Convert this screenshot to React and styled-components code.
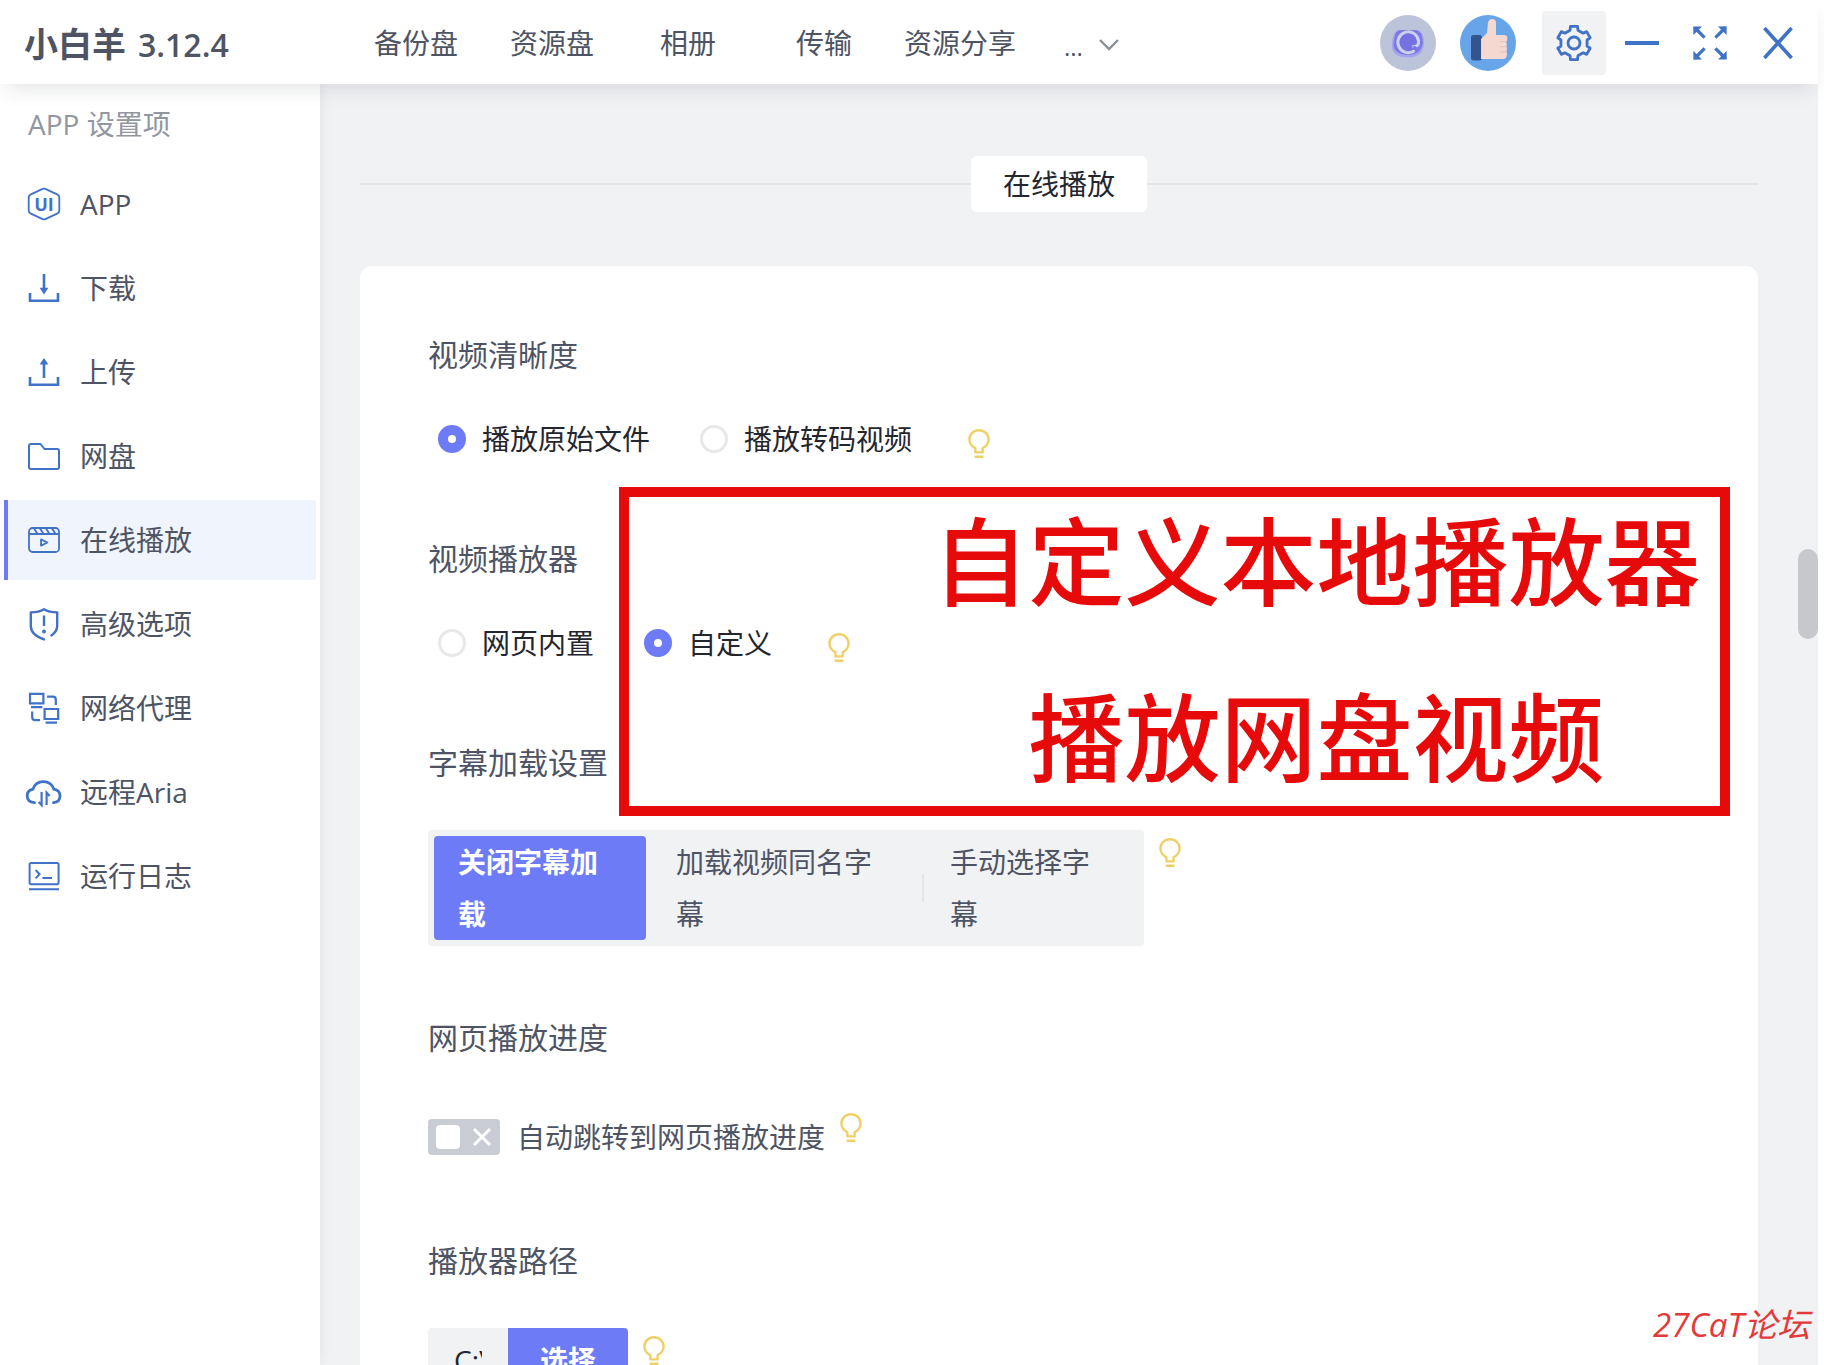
import React, { useState } from "react";
import styled, { createGlobalStyle, css } from "styled-components";

const color = {
  primary: "#6d7cf6",
  icon: "#4072c8",
  text: "#4e5464",
  strong: "#23262f",
  muted: "#92969f",
  fill: "#f1f2f4",
  line: "#e3e5e8",
  bulb: "#efd066",
  mark: "#e60a0a",
};

const GlobalStyle = createGlobalStyle`
  *, *::before, *::after { box-sizing: border-box; }
  body {
    margin: 0;
    background: #fff;
    color: ${color.text};
    font-family: "Open Sans", "Noto Sans CJK SC", sans-serif;
    font-size: 28px;
    line-height: 40px;
  }
  button, input { font: inherit; color: inherit; }
  svg { display: block; flex: none; }
`;

const Window = styled.div`
  display: flex;
  flex-direction: column;
  height: 100vh;
  overflow: hidden;
`;

const Header = styled.header`
  position: relative;
  z-index: 2;
  display: flex;
  align-items: center;
  height: 84px;
  flex: none;
  margin-right: 6px;
  padding: 2px 8px 0 24px;
  background: #fff;
  box-shadow: 0 10px 20px -6px rgba(30, 35, 55, 0.13);
`;

const Brand = styled.h1`
  display: flex;
  align-items: baseline;
  gap: 12px;
  width: 324px;
  margin: 0;
  padding-top: 2px;
  font-size: 34px;
  font-weight: 700;
`;

const Version = styled.span`
  font-size: 32px;
  font-weight: 600;
`;

const Nav = styled.nav`
  display: flex;
  flex: 1;
  padding-top: 4px;
`;

const navItem = css`
  color: ${color.text};
  text-decoration: none;
  white-space: nowrap;
`;

const NavLink = styled.a`
  ${navItem}
  width: 136px;
  text-align: center;
`;

const MoreButton = styled.button`
  ${navItem}
  display: flex;
  align-items: center;
  gap: 16px;
  padding: 0 36px;
  border: 0;
  background: none;
`;

const Dots = styled.span`
  font-size: 24px;
  line-height: 40px;
  padding-top: 4px;
`;

const Accounts = styled.div`
  display: flex;
  gap: 24px;
  margin-right: 26px;
`;

const AvatarButton = styled.button`
  padding: 0;
  border: 0;
  border-radius: 50%;
  background: none;
`;

const WindowControls = styled.div`
  display: flex;
  gap: 4px;
`;

const ControlButton = styled.button`
  display: grid;
  place-items: center;
  width: 64px;
  height: 64px;
  padding: 0;
  border: 0;
  border-radius: 4px;
  background: ${(p) => (p.$active ? color.fill : "none")};
  color: ${color.icon};
`;

const Body = styled.div`
  display: flex;
  flex: 1;
  min-height: 0;
  padding-right: 6px;
`;

const Sidebar = styled.aside`
  position: relative;
  z-index: 1;
  width: 320px;
  flex: none;
  padding: 20px 4px;
  background: #fff;
  box-shadow: 0 0 12px rgba(30, 35, 55, 0.07);
`;

const SidebarTitle = styled.h2`
  margin: 0 0 20px;
  padding-left: 24px;
  color: ${color.muted};
  font-size: 28px;
  font-weight: 400;
`;

const MenuList = styled.ul`
  display: grid;
  gap: 4px;
  margin: 0;
  padding: 0;
  list-style: none;
`;

const MenuLink = styled.a`
  display: flex;
  align-items: center;
  gap: 16px;
  height: 80px;
  padding-left: 16px;
  border-left: 4px solid ${(p) => (p.$active ? color.primary : "transparent")};
  border-radius: 0 4px 4px 0;
  background: ${(p) => (p.$active ? "#f0f4fd" : "none")};
  color: ${color.text};
  text-decoration: none;

  svg { color: ${color.icon}; }
`;

const Content = styled.main`
  position: relative;
  flex: 1;
  min-width: 0;
  overflow: hidden;
  padding: 72px 60px 0 40px;
  background: ${color.fill};
`;

const SectionDivider = styled.div`
  display: flex;
  align-items: center;
  margin-bottom: 54px;

  &::before, &::after {
    content: "";
    flex: 1;
    height: 2px;
    background: ${color.line};
  }
`;

const SectionName = styled.h2`
  margin: 0;
  padding: 8px 32px;
  border-radius: 6px;
  background: #fff;
  color: ${color.strong};
  font-size: 28px;
  font-weight: 400;
`;

const Card = styled.section`
  position: relative;
  display: grid;
  gap: 68px;
  padding: 65px 68px;
  border-radius: 12px;
  background: #fff;
`;

const Field = styled.div`
  display: grid;
  gap: ${(p) => (p.$compact ? 32 : 43)}px;
`;

const FieldTitle = styled.h3`
  margin: 0;
  font-size: 30px;
  font-weight: 400;
  line-height: 48px;
`;

const RadioRow = styled.div`
  display: flex;
  align-items: center;
  gap: 50px;
  height: 56px;
  padding-left: 10px;
`;

const RadioLabel = styled.label`
  display: flex;
  align-items: center;
  gap: 16px;
  color: ${color.strong};
`;

const RadioInput = styled.input.attrs({ type: "radio" })`
  appearance: none;
  width: 28px;
  height: 28px;
  margin: 0;
  border: 3px solid #e7e8ea;
  border-radius: 50%;
  background: #fff;

  &:checked { border: 10px solid ${color.primary}; }
`;

const Row = styled.div`
  display: flex;
  align-items: flex-start;
  gap: 15px;
`;

const TipButton = styled.button`
  flex: none;
  align-self: flex-start;
  margin: ${(p) => (p.$low ? "18px 0 0 6px" : "8px 0 0")};
  padding: 0;
  border: 0;
  background: none;
  color: ${color.bulb};
`;

const Segments = styled.div`
  display: grid;
  grid-template-columns: 212fr 268fr 212fr;
  gap: 6px;
  width: 100%;
  max-width: 716px;
  padding: 6px;
  border-radius: 4px;
  background: ${color.fill};
`;

const Segment = styled.button`
  position: relative;
  padding: 0 24px;
  border: 0;
  border-radius: 4px;
  background: ${(p) => (p.$active ? color.primary : "none")};
  color: ${(p) => (p.$active ? "#fff" : color.text)};
  font-weight: ${(p) => (p.$active ? 700 : 400)};
  line-height: 52px;
  text-align: left;

  &:last-child::before {
    content: "";
    position: absolute;
    left: -4px;
    top: 38px;
    width: 2px;
    height: 28px;
    background: ${color.line};
  }
`;

const SwitchLabel = styled.label`
  display: flex;
  align-items: center;
  gap: 17px;
  height: 64px;
`;

const SwitchBox = styled.span`
  display: grid;
  grid-template-columns: 72px;
  align-items: center;
  color: #fff;

  > * { grid-area: 1 / 1; }
  > svg { justify-self: ${(p) => (p.$on ? "start" : "end")}; margin: 0 8px; }
`;

const SwitchInput = styled.input.attrs({ type: "checkbox" })`
  appearance: none;
  display: flex;
  align-items: center;
  width: 72px;
  height: 36px;
  margin: 0;
  padding: 0 8px;
  border-radius: 4px;
  background: #c9ccd2;

  &::before {
    content: "";
    width: 24px;
    height: 24px;
    border-radius: 4px;
    background: #fff;
  }
  &:checked {
    justify-content: flex-end;
    background: ${color.primary};
  }
`;

const PathGroup = styled.div`
  display: flex;
  height: 64px;
  border-radius: 4px;
  overflow: hidden;
`;

const PathInput = styled.input`
  width: 80px;
  padding: 0 26px;
  border: 0;
  background: ${color.fill};
  color: ${color.strong};
`;

const ChooseButton = styled.button`
  width: 120px;
  padding: 0;
  border: 0;
  background: ${color.primary};
  color: #fff;
  font-weight: 700;
`;

const Callout = styled.div`
  position: absolute;
  top: 221px;
  left: 259px;
  right: 28px;
  display: grid;
  gap: 80px;
  padding: 12px 0 25px 284px;
  border: 10px solid ${color.mark};
  color: ${color.mark};
  font-size: 96px;
  font-weight: 500;
  line-height: 96px;
  text-align: center;
  white-space: nowrap;
  pointer-events: none;
  font-family: "Noto Sans CJK SC", sans-serif;
`;

const ScrollThumb = styled.div`
  position: absolute;
  top: 465px;
  right: 0;
  width: 20px;
  height: 90px;
  border-radius: 10px;
  background: #c7c8cb;
`;

const Watermark = styled.div`
  position: absolute;
  z-index: 3;
  right: 14px;
  bottom: 20px;
  color: #e23a3a;
  font-size: 33px;
  font-style: italic;
`;

function Icon({ size = 40, width = 2, children }) {
  return (
    <svg
      width={size}
      height={size}
      viewBox="0 0 40 40"
      fill="none"
      stroke="currentColor"
      strokeWidth={width}
      aria-hidden="true"
    >
      {children}
    </svg>
  );
}

const AppIcon = () => (
  <Icon width={1.8}>
    <path d="M18.6 4.9Q20 4.2 21.4 4.9L33.6 10.6Q35.3 11.5 35.3 13.4V26.6Q35.3 28.5 33.6 29.4L21.4 35.1Q20 35.8 18.6 35.1L6.4 29.4Q4.7 28.5 4.7 26.6V13.4Q4.7 11.5 6.4 10.6Z" />
    <text
      x="20"
      y="26.8"
      textAnchor="middle"
      fontFamily="Open Sans, sans-serif"
      fontSize="18"
      fontWeight="700"
      fill="currentColor"
      stroke="none"
    >
      UI
    </text>
  </Icon>
);

const DownloadIcon = () => (
  <Icon width={2.6}>
    <path d="M20 6V22M6 25V32.8H34V25" />
    <path d="M15.6 19.8H24.4L20 26.4Z" fill="currentColor" stroke="none" />
  </Icon>
);

const UploadIcon = () => (
  <Icon width={2.6}>
    <path d="M20 26V9M6 25V32.8H34V25" />
    <path d="M15.6 12.4H24.4L20 6Z" fill="currentColor" stroke="none" />
  </Icon>
);

const FolderIcon = () => (
  <Icon width={2}>
    <path d="M7 8H16.5L20.5 13H33Q35 13 35 15V31Q35 33 33 33H7Q5 33 5 31V10Q5 8 7 8Z" strokeLinejoin="round" />
  </Icon>
);

const MediaIcon = () => (
  <Icon width={1.8}>
    <rect x="5" y="8" width="30" height="24" rx="3.5" />
    <path d="M5 14H35M10 8.4L13.6 14M16 8.4L19.6 14M22 8.4L25.6 14M28 8.4L31.6 14" />
    <path d="M17 19.4V25.6L23.4 22.5Z" strokeLinejoin="round" />
  </Icon>
);

const ShieldIcon = () => (
  <Icon width={2.4}>
    <path d="M20 35.4Q6.8 30.8 6.8 22V8.4Q15 8.2 20 5.2Q25 8.2 33.2 8.4V22Q33.2 27.4 27.4 31.4" strokeLinejoin="round" strokeLinecap="round" />
    <path d="M20 11.5V22" />
    <circle cx="20" cy="27.4" r="2" fill="currentColor" stroke="none" />
  </Icon>
);

const NetworkIcon = () => (
  <Icon width={2.2}>
    <path d="M6 5.8H19.4V15.4H6ZM7 19.2H18.4M20.6 21H34.2V31H20.6ZM21.6 34.6H33M23 8.6H29Q31.8 8.6 31.8 11.4V17M8.2 23.4V29Q8.2 32.2 11.2 32.2H16" />
  </Icon>
);

const CloudIcon = () => (
  <Icon width={2.8}>
    <path d="M10.5 30.6Q3.2 30.2 3.2 23.8Q3.2 18.4 9 17.2Q11.2 9.6 19.4 9.6Q27.4 9.6 29.8 17.2Q36 18.2 36 24Q36 30 29.4 30.6" strokeLinecap="round" />
    <path d="M17.6 20V33L14.6 30M22.6 33V20.6L25.6 24" strokeWidth="2.2" />
  </Icon>
);

const TerminalIcon = () => (
  <Icon width={2}>
    <rect x="5.6" y="7" width="29" height="21.2" rx="1.6" />
    <path d="M5 33.2H35M11.6 14L15.6 18.2L11.6 22.4M18.4 22H28" />
  </Icon>
);

const gearOutline = (() => {
  const at = (radius, degrees) => {
    const a = (degrees * Math.PI) / 180;
    return `${(20 + radius * Math.cos(a)).toFixed(2)} ${(20 + radius * Math.sin(a)).toFixed(2)}`;
  };
  const points = [];
  for (let tooth = 0; tooth < 6; tooth += 1) {
    const mid = tooth * 60 - 90;
    points.push(at(13.4, mid - 17), at(17, mid - 12), at(17, mid + 12), at(13.4, mid + 17));
  }
  return `M${points.join("L")}Z`;
})();

const GearIcon = () => (
  <Icon width={2.8}>
    <path d={gearOutline} strokeLinejoin="round" />
    <circle cx="20" cy="20" r="6" />
  </Icon>
);

const MinimizeIcon = () => (
  <Icon width={4}>
    <path d="M3 20H37" />
  </Icon>
);

const ExpandIcon = () => (
  <Icon width={3.2}>
    {[0, 90, 180, 270].map((turn) => (
      <g key={turn} transform={`rotate(${turn} 20 20)`}>
        <path d="M7 7L14.6 14.6" />
        <path d="M3.2 3.4H12L3.4 12Z" fill="currentColor" stroke="none" />
      </g>
    ))}
  </Icon>
);

const CloseIcon = () => (
  <Icon width={3.6}>
    <path d="M6.4 5L33.6 35M33.6 5L6.4 35" />
  </Icon>
);

const ChevronIcon = () => (
  <svg width="20" height="12" viewBox="0 0 20 12" fill="none" stroke="#8a8f99" strokeWidth="2.4" aria-hidden="true">
    <path d="M1 1L10 10L19 1" />
  </svg>
);

const CrossIcon = () => (
  <svg width="20" height="20" viewBox="0 0 20 20" fill="none" stroke="currentColor" strokeWidth="3" aria-hidden="true">
    <path d="M2 2L18 18M18 2L2 18" />
  </svg>
);

const DriveAvatar = () => (
  <svg width="56" height="56" viewBox="0 0 56 56" aria-hidden="true">
    <circle cx="28" cy="28" r="28" fill="#bcc4d9" />
    <path d="M19 15H37Q44 16 44 28Q44 42 28 42.5Q12.4 42 12 32Q12 16 19 15Z" fill="#a5a5ee" />
    <path d="M20 15H36Q42.4 16 42.8 27Q42 39.4 28 40Q14 39.4 13.6 30Q14 16 20 15Z" fill="#7c7ae6" />
    <path
      d="M33.5 36.2A10.4 10.4 0 1 1 38.6 26Q39 31.6 33.6 31.4"
      fill="#7571e3"
      stroke="#cdd2ea"
      strokeWidth="3"
      strokeLinecap="round"
    />
    <path d="M33.4 31.4L36.4 33.4" stroke="#7571e3" strokeWidth="2" />
  </svg>
);

const ThumbAvatar = () => (
  <svg width="56" height="56" viewBox="0 0 56 56" aria-hidden="true">
    <circle cx="28" cy="28" r="28" fill="#68a4ea" />
    <rect x="11" y="20" width="11" height="25.5" rx="2.5" fill="#33548c" />
    <path d="M21 24L27 18L28 8Q28.6 4 32 4Q36 4 36 8V20H44Q47.4 20 47.4 23.4Q47.4 25.8 46 27Q47.4 29 46.6 31.4Q47.4 34 46.4 36Q47.4 38 46.8 41Q46 44 43 44H21Z" fill="#f5d9d0" />
    <path d="M40 26.6H46M40 31.8H46.4M40 36.8H46.4" stroke="#eac3b5" strokeWidth="1" />
  </svg>
);

function Tip({ low }) {
  return (
    <TipButton type="button" aria-label="提示" $low={low}>
      <svg width="22" height="30" viewBox="0 0 22 30" fill="none" stroke="currentColor" strokeWidth="2.4" aria-hidden="true">
        <path d="M7.4 23.4V19.4Q1.4 16 1.4 10.6A9.6 9.4 0 0 1 20.6 10.6Q20.6 16 14.6 19.4V23.4Z" strokeLinejoin="round" />
        <path d="M6.6 27.8H15.4" strokeWidth="2.6" />
      </svg>
    </TipButton>
  );
}

function RadioGroup({ name, options, value, onChange }) {
  return (
    <RadioRow role="radiogroup">
      {options.map((option) => (
        <RadioLabel key={option}>
          <RadioInput name={name} checked={value === option} onChange={() => onChange(option)} />
          {option}
        </RadioLabel>
      ))}
      <Tip low />
    </RadioRow>
  );
}

const navItems = ["备份盘", "资源盘", "相册", "传输", "资源分享"];

const menuItems = [
  ["APP", AppIcon],
  ["下载", DownloadIcon],
  ["上传", UploadIcon],
  ["网盘", FolderIcon],
  ["在线播放", MediaIcon],
  ["高级选项", ShieldIcon],
  ["网络代理", NetworkIcon],
  ["远程Aria", CloudIcon],
  ["运行日志", TerminalIcon],
];

const subtitleModes = ["关闭字幕加载", "加载视频同名字幕", "手动选择字幕"];

export default function App() {
  const [page, setPage] = useState("在线播放");
  const [quality, setQuality] = useState("播放原始文件");
  const [player, setPlayer] = useState("自定义");
  const [subtitle, setSubtitle] = useState(subtitleModes[0]);
  const [autoJump, setAutoJump] = useState(false);
  const [path, setPath] = useState("C:\\");

  return (
    <Window>
      <GlobalStyle />
      <Header>
        <Brand>
          小白羊 <Version>3.12.4</Version>
        </Brand>
        <Nav>
          {navItems.map((item) => (
            <NavLink key={item} href="#">{item}</NavLink>
          ))}
          <MoreButton type="button" aria-label="更多">
            <Dots>...</Dots>
            <ChevronIcon />
          </MoreButton>
        </Nav>
        <Accounts>
          <AvatarButton type="button" aria-label="网盘"><DriveAvatar /></AvatarButton>
          <AvatarButton type="button" aria-label="账号"><ThumbAvatar /></AvatarButton>
        </Accounts>
        <WindowControls>
          <ControlButton type="button" aria-label="设置" $active><GearIcon /></ControlButton>
          <ControlButton type="button" aria-label="最小化"><MinimizeIcon /></ControlButton>
          <ControlButton type="button" aria-label="最大化"><ExpandIcon /></ControlButton>
          <ControlButton type="button" aria-label="关闭"><CloseIcon /></ControlButton>
        </WindowControls>
      </Header>

      <Body>
        <Sidebar>
          <SidebarTitle>APP 设置项</SidebarTitle>
          <MenuList>
            {menuItems.map(([label, Glyph]) => (
              <li key={label}>
                <MenuLink href="#" $active={page === label} onClick={() => setPage(label)}>
                  <Glyph />
                  {label}
                </MenuLink>
              </li>
            ))}
          </MenuList>
        </Sidebar>

        <Content>
          <SectionDivider>
            <SectionName>在线播放</SectionName>
          </SectionDivider>

          <Card>
            <Field $compact>
              <FieldTitle>视频清晰度</FieldTitle>
              <RadioGroup
                name="quality"
                options={["播放原始文件", "播放转码视频"]}
                value={quality}
                onChange={setQuality}
              />
            </Field>

            <Field $compact>
              <FieldTitle>视频播放器</FieldTitle>
              <RadioGroup
                name="player"
                options={["网页内置", "自定义"]}
                value={player}
                onChange={setPlayer}
              />
            </Field>

            <Field>
              <FieldTitle>字幕加载设置</FieldTitle>
              <Row>
                <Segments>
                  {subtitleModes.map((mode) => (
                    <Segment
                      key={mode}
                      type="button"
                      $active={subtitle === mode}
                      aria-pressed={subtitle === mode}
                      onClick={() => setSubtitle(mode)}
                    >
                      {mode}
                    </Segment>
                  ))}
                </Segments>
                <Tip />
              </Row>
            </Field>

            <Field>
              <FieldTitle>网页播放进度</FieldTitle>
              <Row>
                <SwitchLabel>
                  <SwitchBox $on={autoJump}>
                    <SwitchInput checked={autoJump} onChange={(e) => setAutoJump(e.target.checked)} />
                    <CrossIcon />
                  </SwitchBox>
                  自动跳转到网页播放进度
                </SwitchLabel>
                <Tip />
              </Row>
            </Field>

            <Field>
              <FieldTitle id="player-path">播放器路径</FieldTitle>
              <Row>
                <PathGroup>
                  <PathInput
                    aria-labelledby="player-path"
                    value={path}
                    onChange={(e) => setPath(e.target.value)}
                  />
                  <ChooseButton type="button">选择</ChooseButton>
                </PathGroup>
                <Tip />
              </Row>
            </Field>

            <Callout>
              <span>自定义本地播放器</span>
              <span>播放网盘视频</span>
            </Callout>
          </Card>
          <ScrollThumb />
        </Content>
      </Body>
      <Watermark>27CaT论坛</Watermark>
    </Window>
  );
}
